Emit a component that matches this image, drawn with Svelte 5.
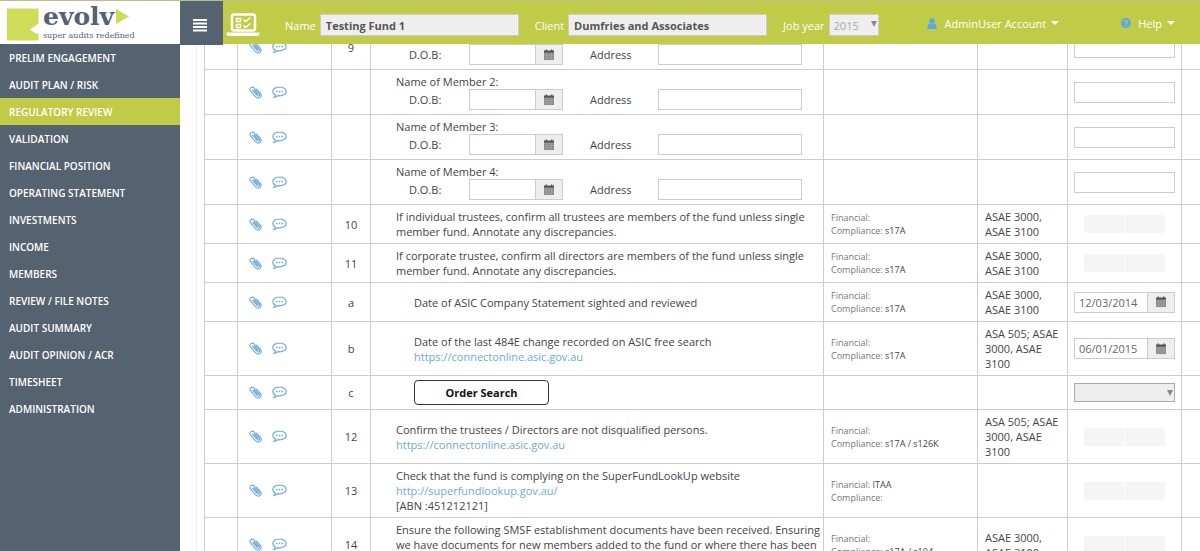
<script lang="ts">
	type Row = {
		no?: string;
		kind: 'member' | 'text' | 'order';
		text?: string;
		link?: string;
		note?: string;
		sub?: boolean;
		financial?: string;
		compliance?: string;
		standard?: string;
		answer: 'text' | 'toggle' | 'date' | 'select';
		value?: string;
	};

	const menu = [
		'PRELIM ENGAGEMENT',
		'AUDIT PLAN / RISK',
		'REGULATORY REVIEW',
		'VALIDATION',
		'FINANCIAL POSITION',
		'OPERATING STATEMENT',
		'INVESTMENTS',
		'INCOME',
		'MEMBERS',
		'REVIEW / FILE NOTES',
		'AUDIT SUMMARY',
		'AUDIT OPINION / ACR',
		'TIMESHEET',
		'ADMINISTRATION'
	];

	let active = $state('REGULATORY REVIEW');

	const rows: Row[] = [
		{ no: '9', kind: 'member', text: 'Name of Member 1:', answer: 'text' },
		{ kind: 'member', text: 'Name of Member 2:', answer: 'text' },
		{ kind: 'member', text: 'Name of Member 3:', answer: 'text' },
		{ kind: 'member', text: 'Name of Member 4:', answer: 'text' },
		{
			no: '10',
			kind: 'text',
			text: 'If individual trustees, confirm all trustees are members of the fund unless single member fund. Annotate any discrepancies.',
			financial: '',
			compliance: 's17A',
			standard: 'ASAE 3000, ASAE 3100',
			answer: 'toggle'
		},
		{
			no: '11',
			kind: 'text',
			text: 'If corporate trustee, confirm all directors are members of the fund unless single member fund. Annotate any discrepancies.',
			financial: '',
			compliance: 's17A',
			standard: 'ASAE 3000, ASAE 3100',
			answer: 'toggle'
		},
		{
			no: 'a',
			kind: 'text',
			sub: true,
			text: 'Date of ASIC Company Statement sighted and reviewed',
			financial: '',
			compliance: 's17A',
			standard: 'ASAE 3000, ASAE 3100',
			answer: 'date',
			value: '12/03/2014'
		},
		{
			no: 'b',
			kind: 'text',
			sub: true,
			text: 'Date of the last 484E change recorded on ASIC free search',
			link: 'https://connectonline.asic.gov.au',
			financial: '',
			compliance: 's17A',
			standard: 'ASA 505; ASAE 3000, ASAE 3100',
			answer: 'date',
			value: '06/01/2015'
		},
		{ no: 'c', kind: 'order', sub: true, answer: 'select' },
		{
			no: '12',
			kind: 'text',
			text: 'Confirm the trustees / Directors are not disqualified persons.',
			link: 'https://connectonline.asic.gov.au',
			financial: '',
			compliance: 's17A / s126K',
			standard: 'ASA 505; ASAE 3000, ASAE 3100',
			answer: 'toggle'
		},
		{
			no: '13',
			kind: 'text',
			text: 'Check that the fund is complying on the SuperFundLookUp website',
			link: 'http://superfundlookup.gov.au/',
			note: '[ABN :451212121]',
			financial: 'ITAA',
			compliance: '',
			answer: 'toggle'
		},
		{
			no: '14',
			kind: 'text',
			text: 'Ensure the following SMSF establishment documents have been received. Ensuring we have documents for new members added to the fund or where there has been a change of trustee.',
			financial: '',
			compliance: 's17A / s104',
			standard: 'ASAE 3000, ASAE 3100',
			answer: 'toggle'
		}
	];
</script>

{#snippet calendar()}
	<svg width="12" height="12" viewBox="0 0 12 12" aria-hidden="true">
		<path d="M1 2h10v9H1z" fill="#888" />
		<path d="M1 1.5h10v2.2H1zM2.6 .5h1.4v2H2.6zM8 .5h1.4v2H8z" fill="#555" />
		<path d="M1 4.3h10M1 6.6h10M1 9h10M3.5 4.3v7M6 4.3v7M8.5 4.3v7" stroke="#aaa" stroke-width=".6" />
	</svg>
{/snippet}

<div class="app">
	<header>
		<a class="logo" href="#home">
			<svg class="mark" width="32" height="33" viewBox="0 0 32 33" aria-hidden="true">
				<path d="M0 .5h31.500v15l-8.500 6 5.500 4h3v7H0z" fill="#cfdc57" />
			</svg>
			<span class="brand">
				<span class="word">evolv
					<svg width="13" height="15" viewBox="0 0 13 15" aria-hidden="true"><path d="M0 0l13 7.500-13 7.500z" fill="#cfdc57" /></svg>
				</span>
				<span class="tagline">super audits redefined</span>
			</span>
		</a>
		<button class="burger" aria-label="Toggle menu">
			<svg width="14" height="13" viewBox="0 0 14 13"><path d="M0 0h14v2H0zM0 3.500h14v2H0zM0 7h14v2H0zM0 10.500h14v2H0z" fill="#fff" /></svg>
		</button>
		<div class="bar">
			<svg class="laptop" width="34" height="24" viewBox="0 0 34 24" fill="none" stroke="#fff" aria-hidden="true">
				<rect x="6" y="1.500" width="23" height="16" rx="2" stroke-width="2.500" />
				<path d="M.5 19.500h33v1.500q0 2-2 2h-29q-2 0-2-2z" fill="#fff" stroke="none" />
				<path d="M10.500 5.500h4v3h-4zM10.500 11.500h4v3h-4z" stroke-width="1.400" />
				<path d="M17.500 6.500l2 2 5-4M17.500 12.500l2 2 5-4" stroke-width="1.600" />
			</svg>
			<label for="fund">Name</label>
			<input id="fund" class="wide" value="Testing Fund 1" readonly />
			<label for="client">Client</label>
			<input id="client" class="wide" value="Dumfries and Associates" readonly />
			<label for="year">Job year</label>
			<span class="pick year">
				<select id="year" disabled><option>2015</option></select>
			</span>
			<nav class="account">
				<a href="#account">
					<svg width="10" height="11" viewBox="0 0 10 11" fill="#5aa9e6" aria-hidden="true">
						<circle cx="5" cy="3" r="2.800" />
						<path d="M.5 11V8.500Q.5 6 3 5.500q2 1.200 4 0 2.500.5 2.500 3V11z" />
					</svg>
					<span>AdminUser Account</span>
					<i class="caret"></i>
				</a>
				<a href="#help">
					<svg width="10" height="10" viewBox="0 0 10 10" aria-hidden="true">
						<circle cx="5" cy="5" r="5" fill="#5aa9e6" />
						<path d="M3.400 4Q3.400 2.500 5 2.500T6.600 3.900Q6.600 4.700 5 5.300v.9M5 7v1.200" fill="none" stroke="#c0cb48" stroke-width="1.200" />
					</svg>
					<span>Help</span>
					<i class="caret"></i>
				</a>
			</nav>
		</div>
	</header>

	<div class="body">
		<nav class="side">
			{#each menu as item}
				<a href="#menu" class:active={item === active} onclick={() => (active = item)}>{item}</a>
			{/each}
		</nav>

		<main>
			<table>
				<colgroup>
					<col class="c-gap" />
					<col class="c-icons" />
					<col class="c-no" />
					<col />
					<col class="c-law" />
					<col class="c-std" />
					<col class="c-answer" />
					<col class="c-end" />
				</colgroup>
				<tbody>
					{#each rows as row, i}
						<tr>
							<td></td>
							<td class="icons">
								<div>
									<button aria-label="Attach file">
										<svg width="13" height="13" viewBox="0 0 13 13" fill="none" stroke="#6ea8dc" stroke-width="1.100" stroke-linecap="round">
											<path d="M3.600 4.200l4.800 5.500q1 .9 1.800.1t0-1.800L5.200 2Q3.600.4 1.900 1.600T1.400 4.700l5.300 6.200q2.200 2.200 4.300.7t.5-4L7.600 3M5.100 3.900l3.800 4.400" />
										</svg>
									</button>
									<button aria-label="Comments">
										<svg width="15" height="13" viewBox="0 0 15 13" fill="none" stroke="#6ea8dc">
											<path d="M7.500 1C3.800 1 .8 2.900.8 5.400c0 1.500 1 2.700 2.500 3.500-.1 1.100-.6 1.900-1.300 2.600 1.500-.2 2.800-.8 3.700-1.800.6.1 1.200.1 1.800.1 3.700 0 6.700-1.900 6.700-4.400S11.200 1 7.500 1z" stroke-width="1.200" />
											<path d="M4 4.800h1.500v1.400H4zM6.800 4.800h1.500v1.400H6.800zM9.600 4.800h1.500v1.400H9.600z" fill="#6ea8dc" stroke="none" />
										</svg>
									</button>
								</div>
							</td>
							<td class="no">{row.no ?? ''}</td>
							<td class="question" class:sub={row.sub}>
								{#if row.kind === 'member'}
									<div>{row.text}</div>
									<div class="member">
										<label for="dob{i}">D.O.B:</label>
										<span class="date">
											<input id="dob{i}" />
											<button aria-label="Pick date">{@render calendar()}</button>
										</span>
										<label class="addr" for="addr{i}">Address</label>
										<input class="box" id="addr{i}" />
									</div>
								{:else if row.kind === 'order'}
									<button class="order">Order Search</button>
								{:else}
									<div>{row.text}</div>
									{#if row.link}
										<a href={row.link}>{row.link}</a>
									{/if}
									{#if row.note}
										<div>{row.note}</div>
									{/if}
								{/if}
							</td>
							<td class="law">
								{#if row.compliance !== undefined}
									<div>Financial: <b>{row.financial}</b></div>
									<div>Compliance: <b>{row.compliance}</b></div>
								{/if}
							</td>
							<td class="std">{row.standard ?? ''}</td>
							<td class="answer">
								{#if row.answer === 'text'}
									<input class="box" aria-label="Answer" />
								{:else if row.answer === 'date'}
									<span class="date">
										<input value={row.value} aria-label="Date" />
										<button aria-label="Pick date">{@render calendar()}</button>
									</span>
								{:else if row.answer === 'select'}
									<span class="pick">
										<select disabled aria-label="Search result"><option></option></select>
									</span>
								{:else}
									<div class="toggle">
										<button aria-label="Yes"></button>
										<button aria-label="No"></button>
									</div>
								{/if}
							</td>
							<td></td>
						</tr>
					{/each}
				</tbody>
			</table>
		</main>
	</div>
</div>

<style>
	:global(body) {
		margin: 0;
		background: #fff;
	}

	.app {
		display: flex;
		flex-direction: column;
		height: 100vh;
		overflow: hidden;
		font-family: 'Open Sans', 'Noto Sans', sans-serif;
		font-size: 11px;
		line-height: 15px;
		color: #444;
	}

	.app * {
		box-sizing: border-box;
	}

	a {
		text-decoration: none;
		color: #6ea8dc;
	}

	button,
	input,
	select {
		font: inherit;
		color: inherit;
		margin: 0;
		border-radius: 0;
	}

	button {
		padding: 0;
		border: 0;
		background: none;
		cursor: pointer;
	}

	/* header */
	header {
		position: relative;
		z-index: 2;
		display: flex;
		flex: none;
		height: 44px;
		border-top: 1px solid #b9bd8c;
		background: #c0cb48;
	}

	.logo {
		display: flex;
		flex: none;
		width: 180px;
		padding: 7px 0 0 7px;
		background: #fff;
		color: #556270;
	}

	.mark {
		flex: none;
	}

	.brand {
		display: flex;
		flex-direction: column;
		margin: -5px 0 0 4px;
		font-family: 'DejaVu Serif', serif;
	}

	.word {
		display: flex;
		align-items: center;
		gap: 2px;
		font-size: 25px;
		font-weight: bold;
		line-height: 27px;
	}

	.tagline {
		font-size: 8px;
		line-height: 12px;
		white-space: nowrap;
	}

	.burger {
		display: flex;
		flex: none;
		align-items: center;
		justify-content: center;
		width: 43px;
		height: 44px;
		padding: 4px 3px 0 0;
		background: #556270;
	}

	.bar {
		display: flex;
		flex: 1;
		align-items: center;
		padding: 5px 25px 0 3px;
		color: #fff;
		white-space: nowrap;
	}

	.laptop {
		flex: none;
		margin-right: 9px;
	}

	.bar label {
		margin: 0 4px 0 16px;
	}

	.bar input,
	.bar select {
		height: 22px;
		border: 1px solid #ccc;
		background: #eee;
		color: #555;
	}

	.wide {
		flex: 0 1 199px;
		min-width: 60px;
		padding: 0 5px;
		font-weight: bold;
	}

	.account {
		display: flex;
		gap: 62px;
		margin: 0 0 4px auto;
	}

	.account a {
		display: flex;
		align-items: center;
		color: #fff;
	}

	.account span {
		margin: 0 5px 0 7px;
	}

	.caret {
		border: 4px solid transparent;
		border-top-color: #fff;
		border-bottom: 0;
	}

	.pick {
		position: relative;
		display: block;
	}

	.pick::after {
		content: '';
		position: absolute;
		top: 7px;
		right: 2px;
		border: 3px solid transparent;
		border-top: 6px solid #888;
		border-bottom: 0;
	}

	.pick select {
		display: block;
		width: 100%;
		appearance: none;
		padding: 0 4px;
		opacity: 1;
	}

	.year {
		width: 50px;
	}

	.bar .year select {
		color: #aaa;
	}

	/* sidebar */
	.body {
		display: flex;
		flex: 1;
		min-height: 0;
	}

	.side {
		flex: 0 0 180px;
		background: #556270;
	}

	.side a {
		display: block;
		padding: 2px 9px 0;
		font-size: 10px;
		font-weight: 600;
		line-height: 25px;
		color: #fff;
	}

	.side .active {
		background: #c0cb48;
	}

	/* the sheet is scrolled a little under the header */
	main {
		flex: 1;
		min-width: 0;
		margin: -19px 0 0 16px;
		padding-left: 7px;
		border-left: 1px solid #eee;
	}

	table {
		width: 100%;
		table-layout: fixed;
		border-collapse: separate;
		border-spacing: 0;
	}

	.c-gap {
		width: 34px;
	}
	.c-icons {
		width: 94px;
	}
	.c-no {
		width: 39px;
	}
	.c-law {
		width: 154px;
	}
	.c-std {
		width: 90px;
	}
	.c-answer {
		width: 114px;
	}
	.c-end {
		width: 18px;
	}

	td {
		padding: 4px 7px;
		border-right: 1px solid #ccc;
		border-bottom: 1px solid #ccc;
		vertical-align: middle;
	}

	td:first-child {
		border-left: 1px solid #ccc;
	}

	td:last-child {
		padding: 0;
		border-right: 0;
	}

	.icons div {
		display: flex;
		gap: 10px;
		padding-left: 4px;
	}

	.icons button {
		display: flex;
	}

	.no {
		text-align: center;
	}

	.question {
		padding: 4px 0 4px 25px;
	}

	.question.sub {
		padding-left: 43px;
	}

	.member {
		display: flex;
		align-items: center;
		padding-left: 13px;
	}

	.member label {
		width: 60px;
	}

	.member .addr {
		width: 68px;
		margin-left: 27px;
	}

	.member .date {
		width: 94px;
	}

	.member .box {
		width: 144px;
	}

	.box,
	.date input {
		height: 21px;
		padding: 0 4px;
		border: 1px solid #ccc;
		background: #fff;
	}

	.date {
		display: flex;
	}

	.date input {
		flex: 1;
		min-width: 0;
		color: #666;
	}

	.date button {
		display: flex;
		align-items: center;
		justify-content: center;
		width: 27px;
		height: 21px;
		border: 1px solid #ccc;
		border-left: 0;
		background: #eee;
	}

	.order {
		display: block;
		width: 135px;
		height: 25px;
		border: 1px solid #333;
		border-radius: 4px;
		background: #fff;
		font-weight: bold;
		color: #111;
	}

	.law {
		font-size: 9px;
		line-height: 13px;
		color: #777;
	}

	.law b {
		font-weight: normal;
		color: #444;
	}

	.answer .box {
		display: block;
		width: 100%;
	}

	.answer {
		padding: 4px 6px;
	}

	.answer select {
		height: 19px;
		border: 1px solid #aaa;
		background: #eee;
	}

	.toggle {
		display: flex;
		gap: 1px;
		width: 81px;
		margin: 0 auto;
	}

	.toggle button {
		flex: 1;
		height: 18px;
		background: #f5f5f5;
	}

	.toggle button:first-child {
		border-radius: 3px 0 0 3px;
	}

	.toggle button:last-child {
		border-radius: 0 3px 3px 0;
	}
</style>
